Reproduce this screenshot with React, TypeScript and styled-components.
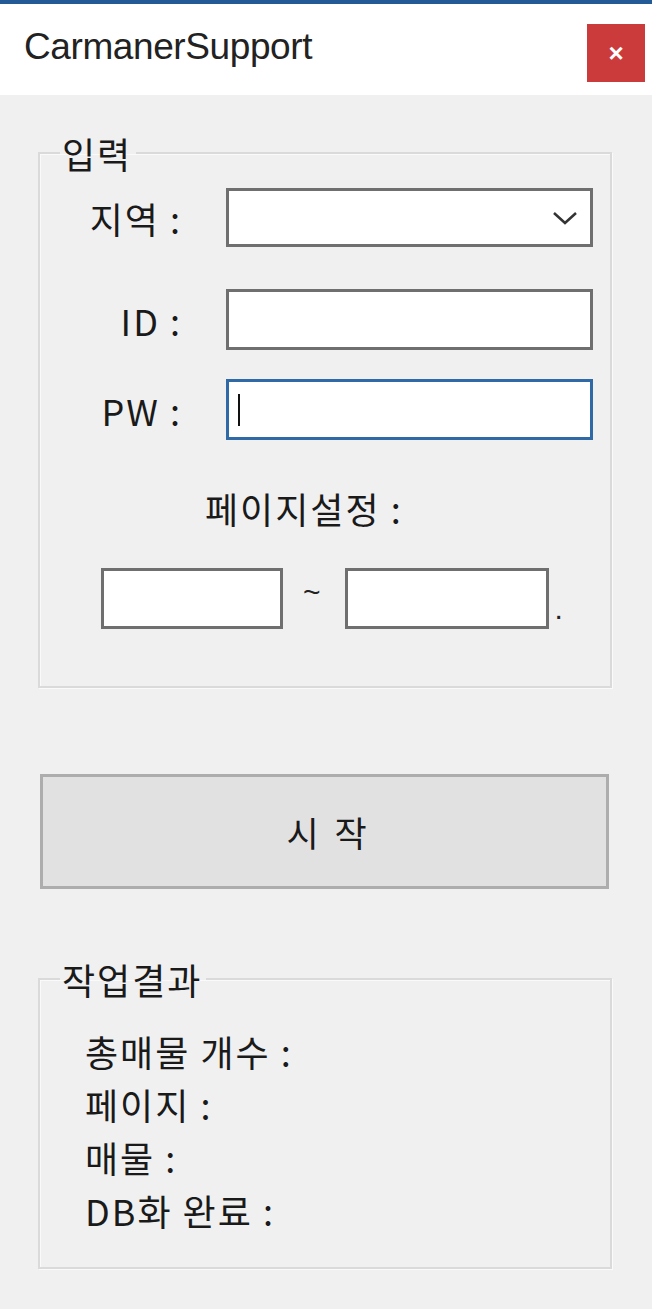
import React from 'react';
import styled, { createGlobalStyle } from 'styled-components';

const GlobalStyle = createGlobalStyle`
  html, body {
    margin: 0;
    padding: 0;
    background: #f0f0f0;
  }
  body {
    font-family: 'Noto Sans CJK KR', 'Noto Sans', sans-serif;
    color: #1a1a1a;
  }
`;

const KO = `'Noto Sans CJK KR', 'Noto Sans', sans-serif`;

const Window = styled.div`
  width: 652px;
  min-height: 1309px;
  box-sizing: border-box;
  background: #f0f0f0;
  border-top: 4px solid #245a96;
  display: flex;
  flex-direction: column;
`;

const TitleBar = styled.div`
  height: 91px;
  background: #ffffff;
  display: flex;
  align-items: center;
  justify-content: space-between;
  padding: 0 7px 0 24px;
  box-sizing: border-box;
`;

const Title = styled.div`
  font-family: 'Liberation Sans', Arial, sans-serif;
  font-size: 37px;
  color: #222;
  letter-spacing: -0.4px;
  margin-top: -6px;
`;

const CloseButton = styled.button`
  width: 58px;
  height: 58px;
  margin-top: 6px;
  border: none;
  background: #cc3b3b;
  color: #fff;
  font-family: 'Liberation Sans', Arial, sans-serif;
  font-weight: bold;
  font-size: 26px;
  line-height: 1;
  padding: 0;
  display: flex;
  align-items: center;
  justify-content: center;
`;

const Body = styled.div`
  padding: 0 40px 0 38px;
  display: flex;
  flex-direction: column;
`;

const Group = styled.fieldset<{ $height: number; $mt: number }>`
  margin: ${({ $mt }) => $mt}px 0 0 0;
  padding: 0;
  height: ${({ $height }) => $height}px;
  box-sizing: border-box;
  border: 2px solid #dadada;
  box-shadow: inset 1px 1px 0 #fafafa, 1px 1px 0 #fafafa;
  min-width: 0;
`;

const Legend = styled.legend`
  margin-left: 20px;
  padding: 0 4px 0 2px;
  font-family: ${KO};
  font-size: 36px;
  line-height: 40px;
  letter-spacing: 2px;
  color: #1a1a1a;
`;

const FieldGrid = styled.div`
  display: grid;
  grid-template-columns: 140px 367px;
  column-gap: 46px;
  align-items: center;
  margin-top: 15px;
`;

const Label = styled.div<{ $mt?: number }>`
  text-align: right;
  font-family: ${KO};
  font-size: 36px;
  letter-spacing: 2px;
  color: #1a1a1a;
  margin-top: ${({ $mt }) => $mt ?? 0}px;
  margin-right: -2px;
  white-space: pre;
`;

const TextBox = styled.div<{ $focused?: boolean; $mt?: number; $width?: number }>`
  width: ${({ $width }) => ($width ? `${$width}px` : '100%')};
  height: 61px;
  box-sizing: border-box;
  background: #fff;
  border: 3px solid ${({ $focused }) => ($focused ? '#2f6aa6' : '#6f6f6f')};
  margin-top: ${({ $mt }) => $mt ?? 0}px;
  position: relative;
  display: flex;
  align-items: center;
`;

const Caret = styled.span`
  display: block;
  width: 2px;
  height: 32px;
  background: #111;
  margin-left: 9px;
`;

const ComboBox = styled(TextBox)`
  height: 59px;
  justify-content: flex-end;
  padding-right: 12px;
`;

const PageLabel = styled.div`
  font-family: ${KO};
  font-size: 36px;
  letter-spacing: 2px;
  color: #1a1a1a;
  margin: 42px 0 0 165px;
  white-space: pre;
`;

const RangeRow = styled.div`
  display: flex;
  align-items: center;
  margin: 34px 0 0 61px;
`;

const RangeSep = styled.span<{ $pad: string; $mt: number }>`
  font-family: 'Liberation Sans', Arial, sans-serif;
  font-size: 30px;
  color: #222;
  padding: ${({ $pad }) => $pad};
  margin-top: ${({ $mt }) => $mt}px;
`;

const StartButton = styled.button`
  margin: 86px 0 0 2px;
  width: 569px;
  height: 115px;
  background: #e1e1e1;
  border: 3px solid #adadad;
  font-family: ${KO};
  font-size: 35px;
  color: #1a1a1a;
  letter-spacing: 4px;
  padding: 0 0 0 8px;
  display: flex;
  align-items: center;
  justify-content: center;
`;

const ResultList = styled.div`
  display: flex;
  flex-direction: column;
  margin: 26px 0 0 45px;
`;

const ResultLine = styled.div`
  font-family: ${KO};
  font-size: 36px;
  line-height: 53px;
  letter-spacing: 2px;
  color: #1a1a1a;
  white-space: pre;
`;

const Chevron = () => (
  <svg width="26" height="16" viewBox="0 0 26 16">
    <path d="M2 3 L13 13 L24 3" fill="none" stroke="#333" strokeWidth="2.5" />
  </svg>
);

const App: React.FC = () => {
  return (
    <>
      <GlobalStyle />
      <Window>
        <TitleBar>
          <Title>CarmanerSupport</Title>
          <CloseButton aria-label="close">×</CloseButton>
        </TitleBar>
        <Body>
          <Group $height={555} $mt={38}>
            <Legend>입력</Legend>
            <FieldGrid>
              <Label>지역 :</Label>
              <ComboBox>
                <Chevron />
              </ComboBox>
              <Label $mt={42}>ID :</Label>
              <TextBox $mt={42} />
              <Label $mt={29}>PW :</Label>
              <TextBox $mt={29} $focused>
                <Caret />
              </TextBox>
            </FieldGrid>
            <PageLabel>페이지설정 :</PageLabel>
            <RangeRow>
              <TextBox $width={182} />
              <RangeSep $pad="0 24px 0 20px" $mt={-14}>~</RangeSep>
              <TextBox $width={204} />
              <RangeSep $pad="0 0 0 6px" $mt={20}>.</RangeSep>
            </RangeRow>
          </Group>
          <StartButton>시 작</StartButton>
          <Group $height={310} $mt={70}>
            <Legend>작업결과</Legend>
            <ResultList>
              <ResultLine>총매물 개수 :</ResultLine>
              <ResultLine>페이지 :</ResultLine>
              <ResultLine>매물 :</ResultLine>
              <ResultLine>DB화 완료 :</ResultLine>
            </ResultList>
          </Group>
        </Body>
      </Window>
    </>
  );
};

export default App;
